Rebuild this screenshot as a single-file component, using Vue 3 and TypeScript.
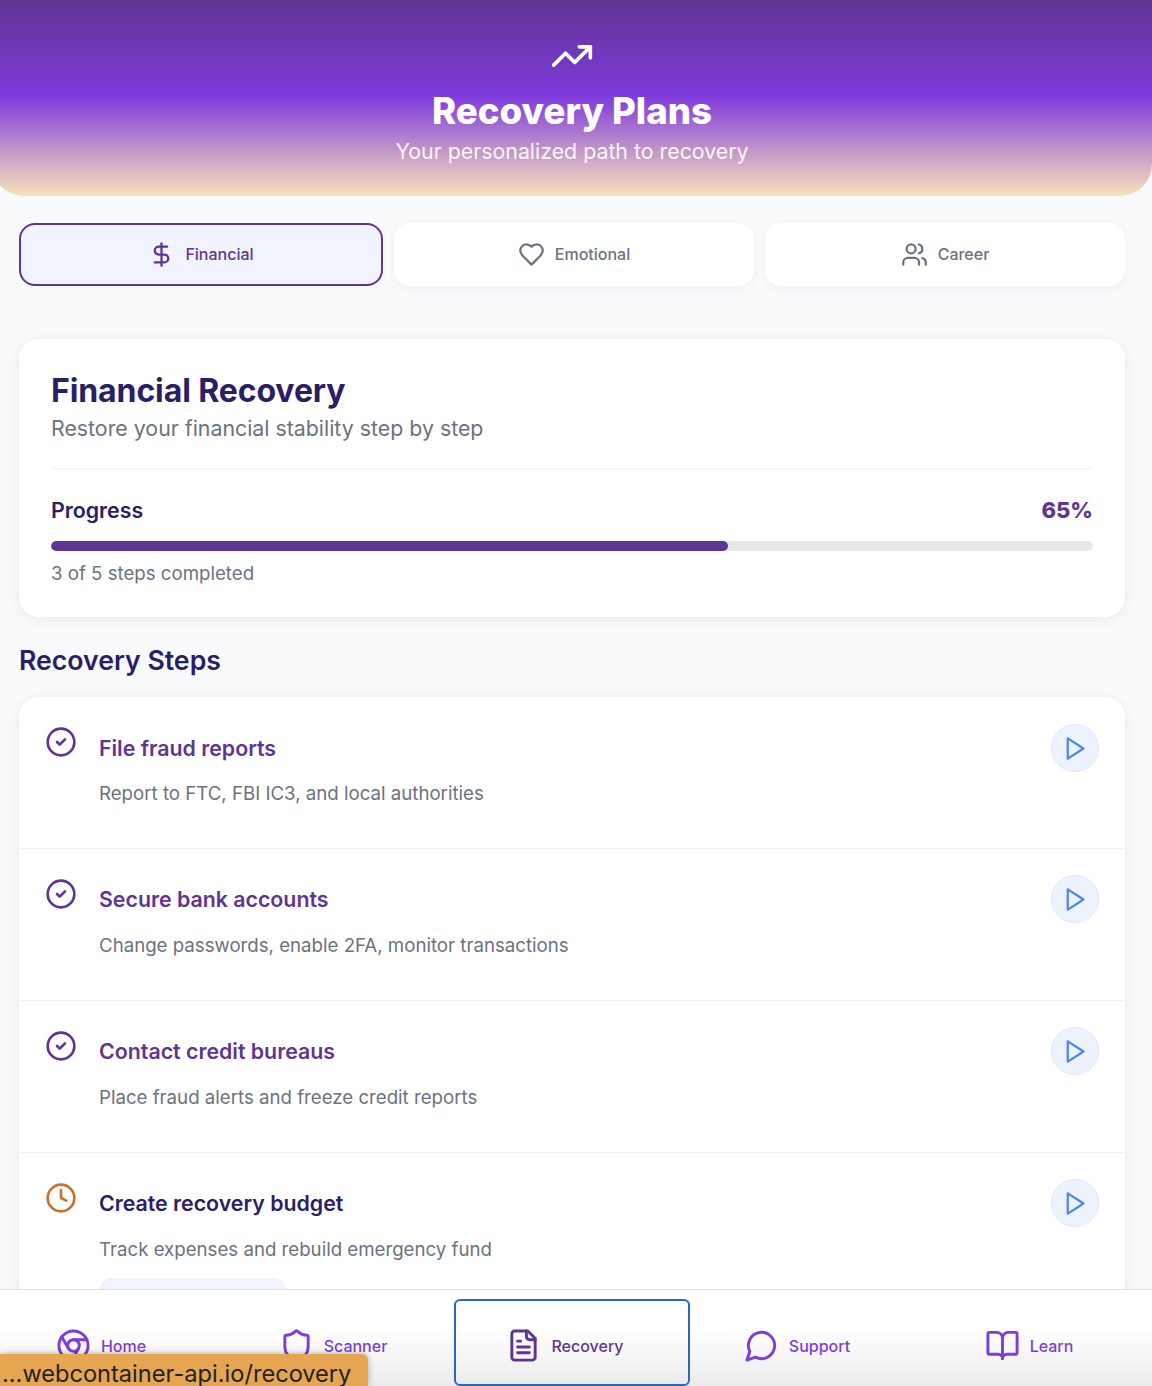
<script setup lang="ts">
const tabs = [
  { label: 'Financial', icon: 'dollar', active: true },
  { label: 'Emotional', icon: 'heart', active: false },
  { label: 'Career', icon: 'users', active: false },
]

const steps = [
  { title: 'File fraud reports', desc: 'Report to FTC, FBI IC3, and local authorities', done: true },
  { title: 'Secure bank accounts', desc: 'Change passwords, enable 2FA, monitor transactions', done: true },
  { title: 'Contact credit bureaus', desc: 'Place fraud alerts and freeze credit reports', done: true },
  { title: 'Create recovery budget', desc: 'Track expenses and rebuild emergency fund', done: false },
]

const navItems = [
  { label: 'Home', icon: 'chrome', active: false },
  { label: 'Scanner', icon: 'shield', active: false },
  { label: 'Recovery', icon: 'file', active: true },
  { label: 'Support', icon: 'message', active: false },
  { label: 'Learn', icon: 'book', active: false },
]

const progress = 65
</script>

<template>
  <div class="page">
    <main class="main">
      <header class="hero">
        <svg class="hero-icon" viewBox="0 0 24 24" fill="none" stroke="currentColor" stroke-width="2" stroke-linecap="round" stroke-linejoin="round">
          <polyline points="22 7 13.5 15.5 8.5 10.5 2 17" />
          <polyline points="16 7 22 7 22 13" />
        </svg>
        <h1>Recovery Plans</h1>
        <p>Your personalized path to recovery</p>
      </header>

      <div class="content">
        <div class="tabs">
          <button v-for="t in tabs" :key="t.label" class="tab" :class="{ active: t.active }">
            <svg class="tab-icon" viewBox="0 0 24 24" fill="none" stroke="currentColor" stroke-width="2" stroke-linecap="round" stroke-linejoin="round">
              <template v-if="t.icon === 'dollar'">
                <line x1="12" x2="12" y1="2" y2="22" />
                <path d="M17 5H9.5a3.5 3.5 0 0 0 0 7h5a3.5 3.5 0 0 1 0 7H6" />
              </template>
              <path v-else-if="t.icon === 'heart'" d="M19 14c1.49-1.46 3-3.21 3-5.5A5.5 5.5 0 0 0 16.5 3c-1.76 0-3 .5-4.5 2-1.5-1.5-2.74-2-4.5-2A5.5 5.5 0 0 0 2 8.5c0 2.3 1.5 4.05 3 5.5l7 7Z" />
              <template v-else>
                <path d="M16 21v-2a4 4 0 0 0-4-4H6a4 4 0 0 0-4 4v2" />
                <circle cx="9" cy="7" r="4" />
                <path d="M22 21v-2a4 4 0 0 0-3-3.87" />
                <path d="M16 3.13a4 4 0 0 1 0 7.75" />
              </template>
            </svg>
            <span>{{ t.label }}</span>
          </button>
        </div>

        <section class="card overview">
          <h2>Financial Recovery</h2>
          <p class="overview-sub">Restore your financial stability step by step</p>
          <div class="progress-head">
            <span class="progress-label">Progress</span>
            <span class="progress-value">{{ progress }}%</span>
          </div>
          <div class="bar"><div class="bar-fill" :style="{ width: progress + '%' }"></div></div>
          <p class="progress-note">3 of 5 steps completed</p>
        </section>

        <h3 class="steps-title">Recovery Steps</h3>

        <section class="card steps">
          <div v-for="s in steps" :key="s.title" class="step">
            <svg class="step-status" :class="{ pending: !s.done }" viewBox="0 0 24 24" fill="none" stroke="currentColor" stroke-width="2" stroke-linecap="round" stroke-linejoin="round">
              <circle cx="12" cy="12" r="10" />
              <path v-if="s.done" d="m9 12 2 2 4-4" />
              <polyline v-else points="12 6 12 12 16 14" />
            </svg>
            <div class="step-body">
              <h4 :class="{ done: s.done }">{{ s.title }}</h4>
              <p>{{ s.desc }}</p>
              <div v-if="!s.done" class="step-action"></div>
            </div>
            <button class="play">
              <svg viewBox="0 0 24 24" fill="none" stroke="currentColor" stroke-width="2" stroke-linecap="round" stroke-linejoin="round">
                <polygon points="6 3 20 12 6 21 6 3" />
              </svg>
            </button>
          </div>
        </section>
      </div>
    </main>

    <nav class="nav">
      <div v-for="n in navItems" :key="n.label" class="nav-item" :class="{ active: n.active }">
        <svg class="nav-icon" viewBox="0 0 24 24" fill="none" stroke="currentColor" stroke-width="2" stroke-linecap="round" stroke-linejoin="round">
          <template v-if="n.icon === 'chrome'">
            <circle cx="12" cy="12" r="10" />
            <circle cx="12" cy="12" r="4" />
            <line x1="21.17" x2="12" y1="8" y2="8" />
            <line x1="3.95" x2="8.54" y1="6.06" y2="14" />
            <line x1="10.88" x2="15.46" y1="21.94" y2="14" />
          </template>
          <path v-else-if="n.icon === 'shield'" d="M20 13c0 5-3.5 7.5-7.66 8.95a1 1 0 0 1-.67-.01C7.5 20.5 4 18 4 13V6a1 1 0 0 1 1-1c2 0 4.5-1.2 6.24-2.72a1.17 1.17 0 0 1 1.52 0C14.51 3.81 17 5 19 5a1 1 0 0 1 1 1z" />
          <template v-else-if="n.icon === 'file'">
            <path d="M15 2H6a2 2 0 0 0-2 2v16a2 2 0 0 0 2 2h12a2 2 0 0 0 2-2V7Z" />
            <path d="M14 2v4a2 2 0 0 0 2 2h4" />
            <path d="M10 9H8" />
            <path d="M16 13H8" />
            <path d="M16 17H8" />
          </template>
          <path v-else-if="n.icon === 'message'" d="M7.9 20A9 9 0 1 0 4 16.1L2 22Z" />
          <template v-else>
            <path d="M12 7v14" />
            <path d="M3 18a1 1 0 0 1-1-1V4a1 1 0 0 1 1-1h5a4 4 0 0 1 4 4 4 4 0 0 1 4-4h5a1 1 0 0 1 1 1v13a1 1 0 0 1-1 1h-6a3 3 0 0 0-3 3 3 3 0 0 0-3-3z" />
          </template>
        </svg>
        <span>{{ n.label }}</span>
      </div>
    </nav>

    <div class="status-url">...webcontainer-api.io/recovery</div>
  </div>
</template>

<style>
html, body { margin: 0; overflow: hidden; background: #f9fafb; }
</style>

<style scoped>
.page { position: relative; width: 1160px; height: 1386px; margin-left: -8px; display: flex; flex-direction: column; overflow: hidden; background: #f9fafb; font-family: Inter, "Liberation Sans", sans-serif; }
.main { flex: 1; min-height: 0; overflow: hidden; }

.hero { height: 196px; box-sizing: border-box; padding-top: 34px; text-align: center; color: #fff; border-radius: 0 0 32px 32px; background: linear-gradient(180deg, #5f3594 0%, #7f3adb 49%, #f9e3b9 100%); }
.hero-icon { display: block; width: 44px; height: 44px; margin: 0 auto; }
.hero h1 { margin: 10px 0 0; font-size: 36.6px; line-height: 46px; font-weight: 800; }
.hero p { margin: 3px 0 0; font-size: 21.33px; line-height: 28px; opacity: .9; }

.content { padding: 27px 27px 0; }

.tabs { display: flex; gap: 11px; }
.tab { flex: 1 1 0; height: 63px; display: flex; align-items: center; justify-content: center; gap: 10px; padding: 0 0 1px; border: 0; border-radius: 16px; background: #fff; box-shadow: 0 2px 8px rgba(40, 30, 90, .05); color: #6b7280; font: 500 16px Inter, sans-serif; }
.tab.active { border: 2px solid #5f3594; background: #f1f3fe; color: #5f3594; box-shadow: none; }
.tab-icon { width: 27px; height: 27px; }

.card { background: #fff; border-radius: 20px; box-shadow: 0 2px 12px rgba(40, 30, 90, .08); }

.overview { margin-top: 53px; height: 278px; box-sizing: border-box; padding: 32px; }
.overview h2 { margin: 0; font-size: 32px; line-height: 40px; font-weight: 700; letter-spacing: -.1px; color: #2a1e68; }
.overview-sub { margin: 0; padding-bottom: 22px; font-size: 21.33px; line-height: 35px; color: #6b7280; border-bottom: 1px solid #f1f2f5; }
.progress-head { display: flex; justify-content: space-between; align-items: center; margin-top: 25px; height: 32px; }
.progress-label { font-size: 21.33px; font-weight: 600; color: #2a1e68; }
.progress-value { font-size: 22px; font-weight: 800; color: #5f3594; }
.bar { margin-top: 15px; height: 10px; border-radius: 5px; background: #e5e7eb; overflow: hidden; }
.bar-fill { height: 100%; border-radius: 5px; background: #5f3594; }
.progress-note { margin: 10px 0 0; font-size: 18.67px; line-height: 26px; color: #6b7280; }

.steps-title { margin: 26px 0 19px; font-size: 26.67px; line-height: 35px; font-weight: 600; color: #2a1e68; }

.steps { overflow: hidden; }
.step { display: flex; align-items: flex-start; height: 152px; box-sizing: border-box; padding: 27px 26px 0; border-bottom: 1px solid #f1f2f5; }
.step-status { flex: none; width: 32px; height: 32px; margin-top: 2px; color: #5f3594; }
.step-status.pending { color: #c9702f; }
.step-body { flex: 1; margin-left: 22px; }
.step-body h4 { margin: 10px 0 0; font-size: 21.33px; line-height: 28px; font-weight: 600; color: #2a1e68; }
.step-body h4.done { color: #5f3594; }
.step-body p { margin: 18px 0 0; font-size: 18.67px; line-height: 28px; color: #6b7280; }
.step + .step h4 { margin-top: 9px; }
.step + .step p { margin-top: 19px; }
.step + .step .play { margin-top: -1px; }
.step-action { width: 187px; height: 44px; margin-top: 14px; border-radius: 12px; background: #f1f3fe; }
.play { flex: none; width: 48px; height: 48px; display: flex; align-items: center; justify-content: center; padding: 0 2px 0 0; border: 1px solid #dbe7fb; border-radius: 50%; background: #edf3fe; color: #4f85ee; }
.play svg { width: 27px; height: 27px; }

.nav { flex: none; height: 97px; box-sizing: border-box; display: grid; grid-template-columns: repeat(5, 1fr); padding-top: 11px; border-top: 1px solid #e2dcf6; background: linear-gradient(180deg, #fff 40%, #ebebeb 100%); overflow: hidden; }
.nav-item { position: relative; display: flex; align-items: center; justify-content: center; gap: 10px; height: 83px; padding: 6px 14px 0 0; box-sizing: border-box; color: #7c3ddc; font-size: 16px; font-weight: 500; }
.nav-item.active { color: #5f3594; outline: 2px solid #2a66c8; outline-offset: 0; border-radius: 4px; }
.nav-icon { flex: none; width: 35px; height: 35px; }

.status-url { position: absolute; left: 8px; bottom: 0; width: 368px; height: 32px; box-sizing: border-box; padding: 8px 0 0 2px; background: #e5a551; border-radius: 0 6px 0 0; box-shadow: 0 0 6px rgba(0, 0, 0, .3); color: #222; font-size: 23.6px; line-height: 24px; white-space: nowrap; overflow: hidden; }
</style>
